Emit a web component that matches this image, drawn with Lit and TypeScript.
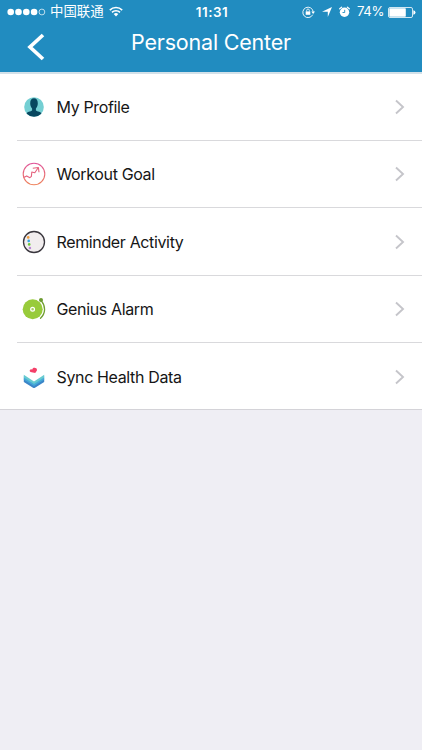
import { LitElement, html, css, svg } from "lit";
import { customElement } from "lit/decorators.js";

const profileIcon = svg`
  <defs><clipPath id="face"><circle cx="12" cy="12" r="9.8"/></clipPath></defs>
  <circle cx="12" cy="12" r="9.8" fill="#74cfd3"/>
  <g clip-path="url(#face)" fill="#08475f">
    <path d="M8.2 8.2C8.2 4.9 9.7 3.3 12 3.3s3.8 1.6 3.8 4.9c0 2.4-.8 4.2-1.900 5.200v2.100c1 1 5.700 1.100 6.700 4.200V23H3.400v-3.300c1-3.100 5.700-3.200 6.700-4.200v-2.100C9 12.400 8.200 10.600 8.200 8.200z"/>
  </g>`;

const goalIcon = svg`
  <defs><linearGradient id="warm" x1="0" y1="0" x2="0" y2="1">
    <stop offset="0" stop-color="#e0559a"/><stop offset="1" stop-color="#ee8057"/>
  </linearGradient></defs>
  <circle cx="12" cy="12" r="10.8" fill="none" stroke="url(#warm)" stroke-width="1.100"/>
  <path d="M1.700 15.400l3-1.500 3.200 1.800 1.500-1.300.4-4.400 3 .8 3.200-4.800M10.800 6.200l5.600-.7.6 4.700" fill="none" stroke="#e5627e" stroke-width="1.100" stroke-linejoin="round"/>`;

const reminderIcon = svg`
  <circle cx="12" cy="12" r="10.500" fill="#f1edee" stroke="#39363d" stroke-width="1.300"/>
  <circle cx="6.200" cy="7.400" r="1.300" fill="#ef9b3a"/>
  <circle cx="6.700" cy="10.900" r="1.300" fill="#35a3e0"/>
  <circle cx="7.200" cy="14.400" r="1.300" fill="#6bc735"/>
  <circle cx="7.900" cy="18" r="1.300" fill="#b986d3"/>`;

const alarmIcon = svg`
  <circle cx="10.700" cy="12.300" r="10" fill="#98cb3b"/>
  <circle cx="10.600" cy="12.300" r="1.900" fill="#a8ce60" stroke="#fff" stroke-width="1.200"/>
  <path d="M19.400 3.900c4.300 5.300 4.500 12.200-.9 17.300" fill="none" stroke="#719f32" stroke-width="1.300" stroke-linecap="round"/>
  <circle cx="19" cy="2.900" r="2" fill="#6c9a30"/>`;

const syncIcon = svg`
  <path d="M1.800 13.500l10.200 6.400 10.200-6.400v3.400L13 22.800q-1 .6-2 0L1.800 16.900z" fill="#3c86c8"/>
  <path d="M1.800 11.400L12 17.800l10.200-6.400v3.200L12 21 1.800 14.600z" fill="#45a9d8"/>
  <path d="M1.800 9.800L12 16.500l10.200-6.700v2.700L12 19 1.800 12.500z" fill="#67cbd0"/>
  <path d="M13.200 8.100L8.500 7C7.200 6.200 7.500 4.400 9 4.200l1.300.2c.2-1.500 1.700-2.200 3-1.500 1.600.2 2 1.600 1.500 2.800z" fill="#f43f68"/>`;

const rows = [
  { label: "My Profile", icon: profileIcon },
  { label: "Workout Goal", icon: goalIcon },
  { label: "Reminder Activity", icon: reminderIcon },
  { label: "Genius Alarm", icon: alarmIcon },
  { label: "Sync Health Data", icon: syncIcon },
];

@customElement("app-root")
export class AppRoot extends LitElement {
  static styles = css`
    :host { display: block; height: 750px; background: #efeef4; font-family: Inter, "Noto Sans CJK SC", sans-serif; overflow: hidden; }
    svg { display: block; flex: none; }
    header { height: 72px; background: #218cc0; color: #fff; }
    .status { height: 24px; display: grid; grid-template-columns: 1fr auto 1fr; align-items: center; padding: 0 6px 0 7px; font-size: 13px; line-height: 24px; }
    .left, .right { display: flex; align-items: center; height: 24px; }
    .right { justify-content: flex-end; }
    .carrier { font-family: "Noto Sans CJK SC", sans-serif; font-size: 13.400px; line-height: 22px; margin: 0 5px 4px 4px; }
    .left svg { margin-bottom: 1px; }
    .time { font-weight: 600; font-size: 13.400px; letter-spacing: 0.500px; line-height: 23px; padding-left: 1px; }
    .lock { margin-right: 7px; }
    .arrow { margin-right: 7px; }
    .clock { margin-right: 7px; }
    .pct { font-size: 13.200px; letter-spacing: -0.400px; margin-right: 4px; line-height: 22px; padding-bottom: 2px; }
    .nav { height: 48px; display: grid; grid-template-columns: 60px 1fr 60px; }
    .back { margin: 9px 0 0 26px; }
    h1 { margin: 0; text-align: center; font-size: 21.500px; font-weight: 400; line-height: 36px; letter-spacing: -0.200px; }
    .list { background: #fff; border-top: 2px solid #d3e1e9; border-bottom: 1px solid #d4d3d8; height: 335px; display: grid; grid-template-rows: 67px 67px 68px 67px 1fr; }
    .row { display: flex; align-items: center; margin-left: 17px; padding: 0 17px 0 5px; border-bottom: 1px solid #d9d9dc; }
    .row:last-child { border-bottom: 0; padding-top: 1px; }
    .label { flex: 1; margin-left: 10.500px; font-size: 16px; line-height: 24px; letter-spacing: -0.360px; color: #161616; }
  `;

  render() {
    return html`
      <header>
        <div class="status">
          <div class="left">
            <svg width="39" height="10" viewBox="0 0 39 10" fill="#fff">
              <circle cx="3.700" cy="5" r="3.300"/><circle cx="11.500" cy="5" r="3.300"/><circle cx="19.300" cy="5" r="3.300"/><circle cx="27.100" cy="5" r="3.300"/>
              <circle cx="34.900" cy="5" r="2.900" fill="none" stroke="#fff" stroke-width=".7"/>
            </svg>
            <span class="carrier">中国联通</span>
            <svg width="14" height="11" viewBox="0 0 14 11" fill="none" stroke="#fff" stroke-width="1.600">
              <path d="M.8 4.100a8.800 8.800 0 0 1 12.400 0M3 6.400a5.700 5.700 0 0 1 8 0"/>
              <path d="M4.700 8.100a3.300 3.300 0 0 1 4.600 0L7 10.500z" fill="#fff" stroke="none"/>
            </svg>
          </div>
          <span class="time">11:31</span>
          <div class="right">
            <svg class="lock" width="13" height="12" viewBox="0 0 13 12" fill="none" stroke="#fff">
              <path d="M10.700 8.700A5.200 5.200 0 1 1 11.200 5.800" stroke-width=".9"/>
              <path d="M9.300 5.600h3.700l-1.850 2.300z" fill="#fff" stroke="none"/>
              <rect x="3.700" y="5.400" width="4.600" height="3.400" fill="#fff" stroke="none"/>
              <path d="M4.700 5.600V4.300a1.300 1.300 0 0 1 2.600 0v1.300" stroke-width=".8"/>
            </svg>
            <svg class="arrow" width="10" height="10" viewBox="0 0 10 10" fill="#fff"><path d="M10 0L5.800 10V4.700H0z"/></svg>
            <svg class="clock" width="11" height="12" viewBox="0 0 11 12">
              <circle cx="5.500" cy="6.300" r="4.700" fill="#fff"/>
              <path d="M.7 2.800L2.600 1.200M10.300 2.800L8.400 1.200" stroke="#fff" stroke-width="1.200" stroke-linecap="round"/>
              <path d="M5.700 3.800v2.700H3.500" fill="none" stroke="#218cc0" stroke-width=".9"/>
            </svg>
            <span class="pct">74%</span>
            <svg width="28" height="11" viewBox="0 0 28 11">
              <rect x=".5" y=".5" width="24" height="10" rx="1.500" fill="none" stroke="#fff" stroke-width=".8"/>
              <rect x="1.300" y="1.300" width="16.500" height="8.400" rx=".6" fill="#fff"/>
              <path d="M25.300 3.300q2.200.4 2.200 2.200t-2.200 2.200z" fill="#fff"/>
            </svg>
          </div>
        </div>
        <div class="nav">
          <svg class="back" width="19" height="28" viewBox="0 0 19 28" fill="none" stroke="#fff" stroke-width="3.700"><path d="M17 2L4 14l13 12"/></svg>
          <h1>Personal Center</h1>
        </div>
      </header>
      <div class="list">
        ${rows.map(r => html`
          <div class="row">
            <svg width="24" height="24" viewBox="0 0 24 24">${r.icon}</svg>
            <span class="label">${r.label}</span>
            <svg width="10" height="16" viewBox="0 0 10 16" fill="none" stroke="#c5c5ca" stroke-width="1.900"><path d="M1 1.500L8 8l-7 6.500"/></svg>
          </div>`)}
      </div>`;
  }
}
